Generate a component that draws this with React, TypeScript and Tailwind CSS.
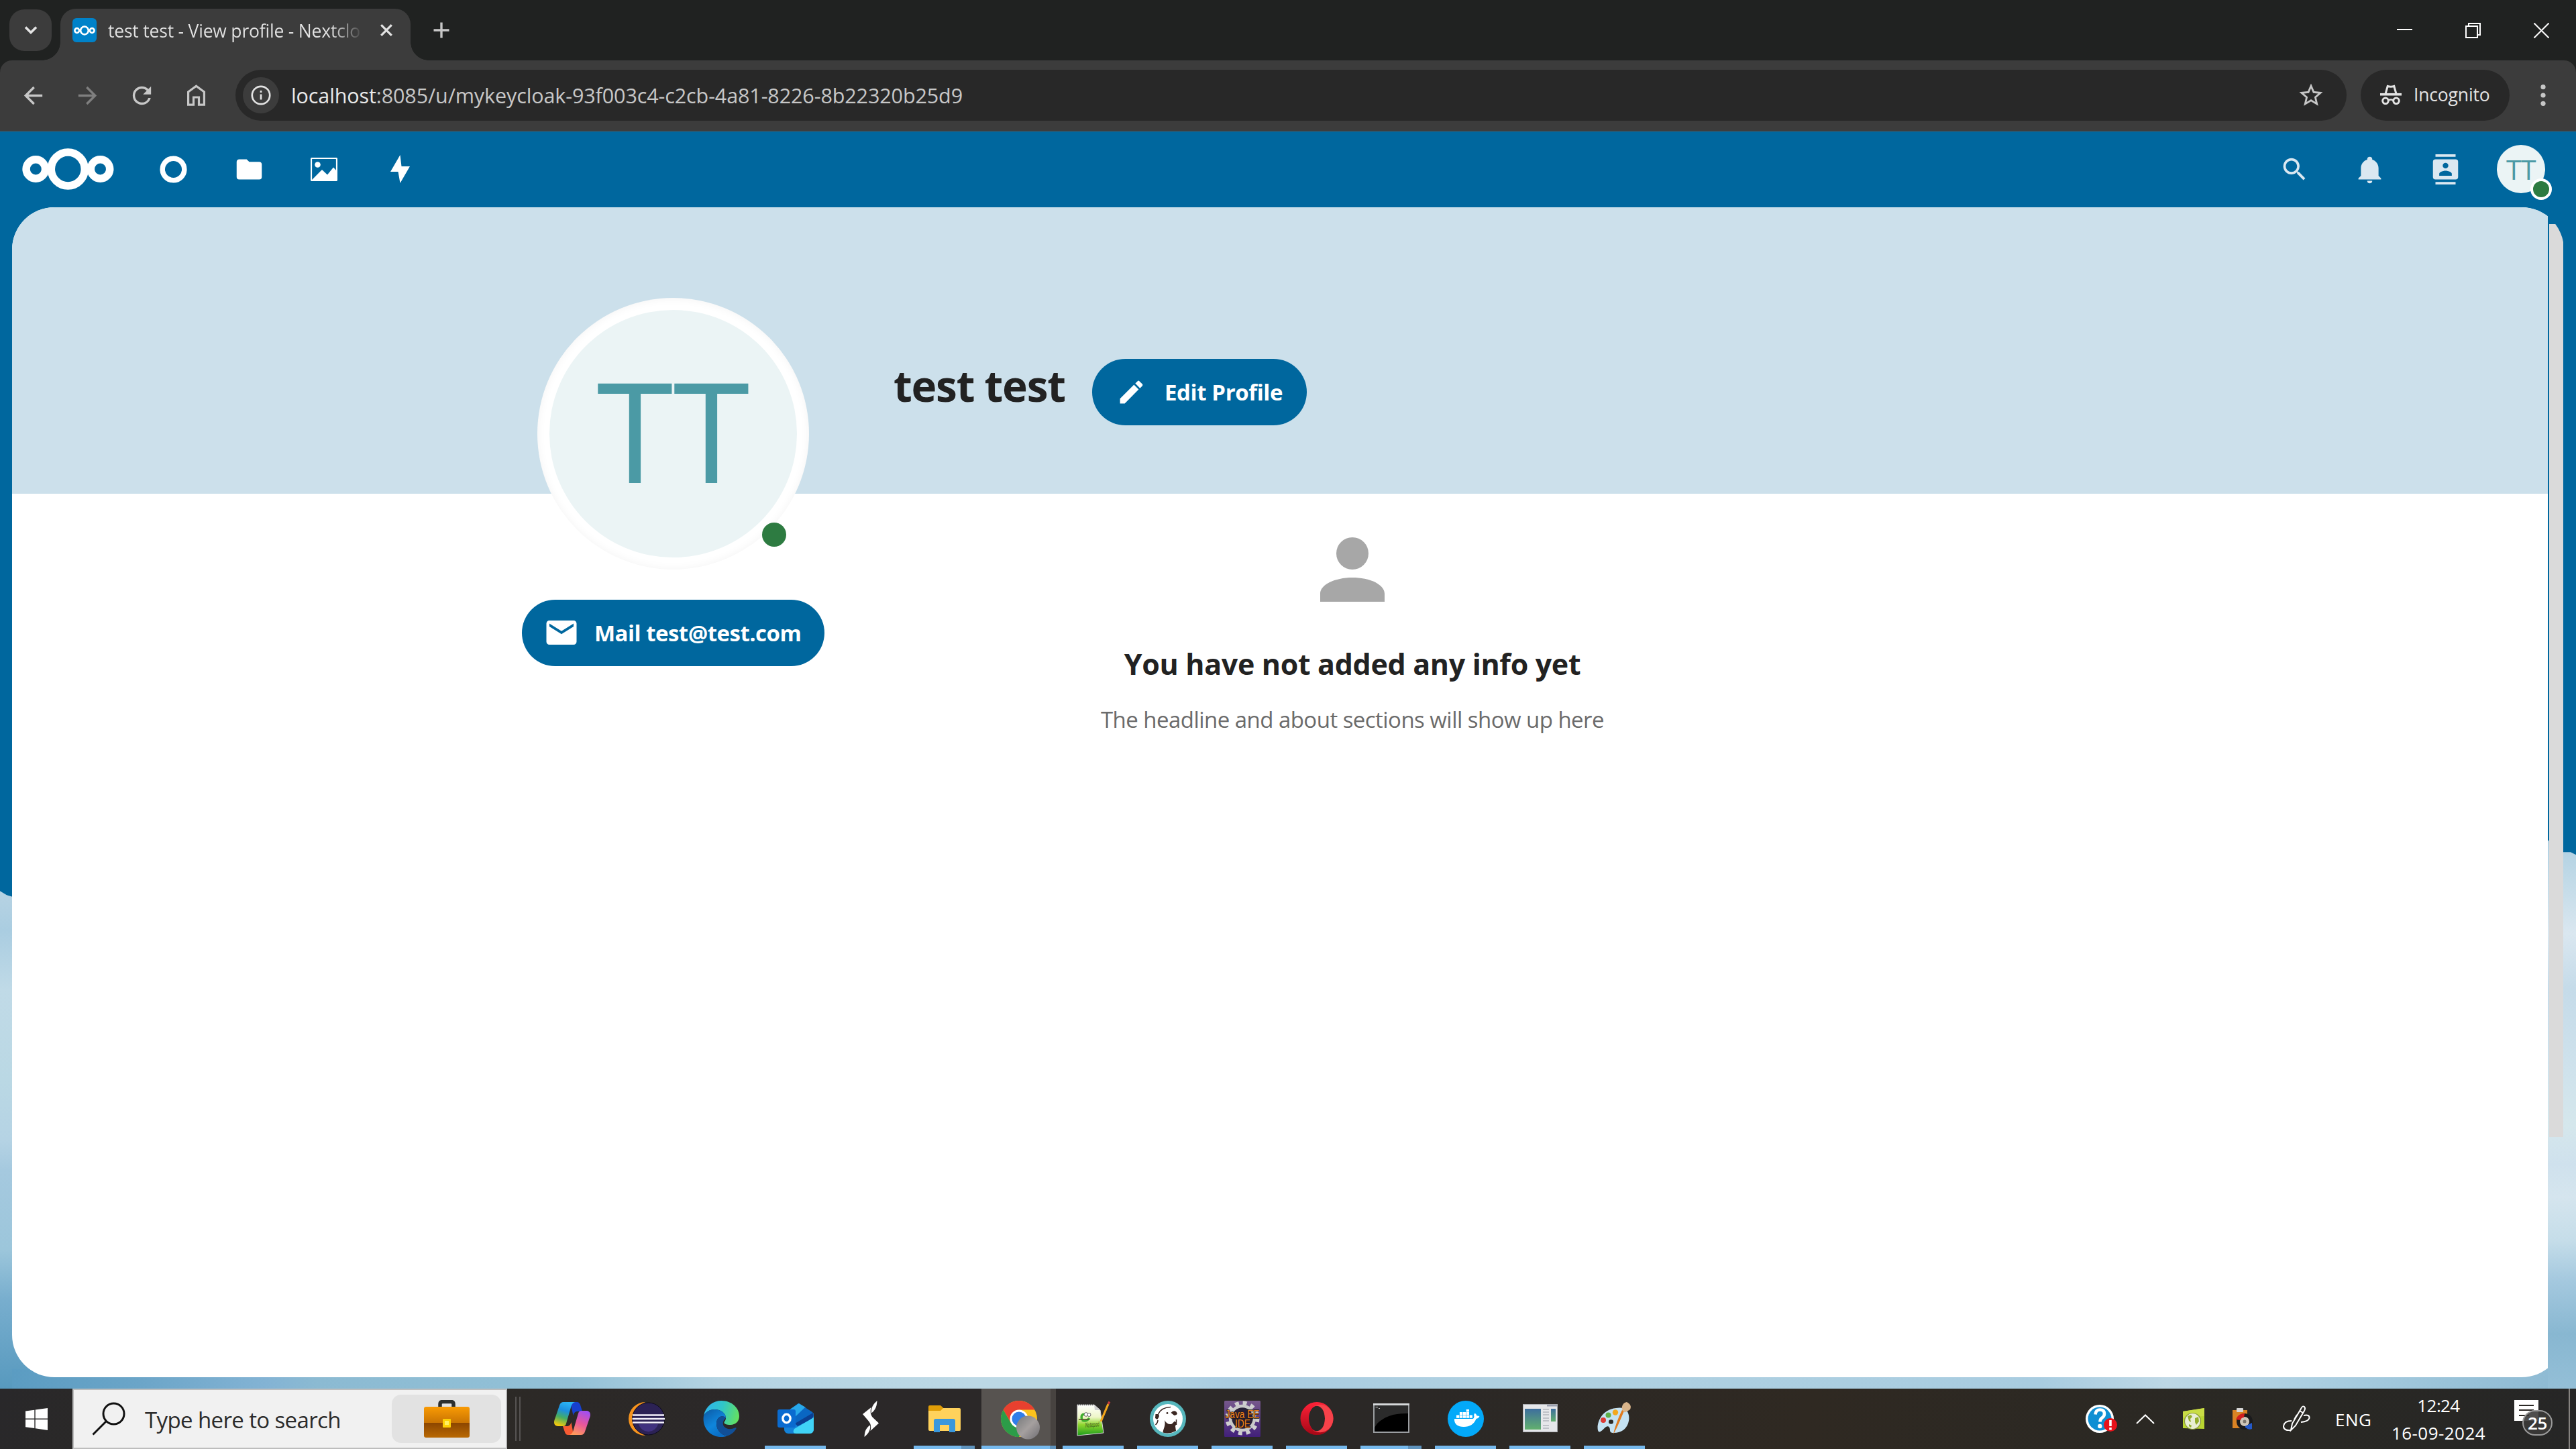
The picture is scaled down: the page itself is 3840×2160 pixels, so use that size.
import React from 'react';
import { MdArrowBack, MdArrowForward, MdRefresh, MdStarBorder, MdSearch } from 'react-icons/md';

function Logo({ className }: { className: string }) {
  return (
    <svg className={className} viewBox="0 0 137 62" fill="none" stroke="currentColor" strokeWidth="11.5">
      <circle cx="20.3" cy="31" r="14.2" />
      <circle cx="68.3" cy="31" r="25" />
      <circle cx="116.5" cy="31" r="14.2" />
    </svg>
  );
}

function TabStrip() {
  return (
    <div className="flex h-[90px] items-start text-[#e3e3e3]">
      <button className="mt-[14px] ml-[14px] flex h-[62px] w-[63px] items-center justify-center rounded-[22px] bg-[#3c3c3c]">
        <svg className="h-[14px] w-[20px]" viewBox="0 0 20 14" fill="none" stroke="currentColor" strokeWidth="3.6">
          <path d="M2 2.5L10 10.5L18 2.5" />
        </svg>
      </button>
      <div className="relative mt-[13px] ml-[13px] h-[77px] w-[522px] rounded-t-[23px] bg-[#3c3c3c]">
        <span className="absolute bottom-0 -left-[27px] h-[27px] w-[27px] bg-[radial-gradient(circle_at_0_0,transparent_26.5px,#3c3c3c_27px)]" />
        <span className="absolute -right-[27px] bottom-0 h-[27px] w-[27px] bg-[radial-gradient(circle_at_100%_0,transparent_26.5px,#3c3c3c_27px)]" />
        <div className="flex h-[64px] items-center pl-[18px]">
          <span className="flex h-[36px] w-[36px] items-center justify-center rounded-[6px] bg-[#0082c9] text-white">
            <Logo className="h-[15px] w-[32px]" />
          </span>
          <span className="ml-[17px] w-[377px] overflow-hidden bg-[linear-gradient(90deg,#e3e3e3_88%,#3c3c3c_101%)] bg-clip-text pt-[3px] text-[26.5px] tracking-[-0.2px] whitespace-nowrap text-transparent">
            test test - View profile - Nextclo
          </span>
          <svg className="ml-[29px] h-[18px] w-[18px]" viewBox="0 0 18 18" fill="none" stroke="currentColor" strokeWidth="3.2">
            <path d="M1.2 1.2L16.8 16.8M16.8 1.2L1.2 16.8" />
          </svg>
        </div>
      </div>
      <svg className="mt-[33px] ml-[34px] h-[24px] w-[24px] text-[#c7c7c7]" viewBox="0 0 24 24" fill="none" stroke="currentColor" strokeWidth="3.4">
        <path d="M12 .5V23.500M.5 12H23.500" />
      </svg>
      <div className="ml-auto flex h-[90px] items-center gap-[79px] pr-[40px] text-white">
        <svg className="h-[24px] w-[23px]" viewBox="0 0 23 24" fill="none" stroke="currentColor" strokeWidth="2">
          <path d="M0 11H23" />
        </svg>
        <svg className="h-[23px] w-[23px]" viewBox="0 0 23 23" fill="none" stroke="currentColor" strokeWidth="2">
          <path d="M1 5H18V22H1zM5 5V1H22V18H18" />
        </svg>
        <svg className="h-[23px] w-[23px]" viewBox="0 0 23 23" fill="none" stroke="currentColor" strokeWidth="2">
          <path d="M.5 .5L22.500 22.500M22.500 .5L.5 22.500" />
        </svg>
      </div>
    </div>
  );
}

function Toolbar() {
  return (
    <div className="flex h-[105.500px] items-center rounded-t-[18px] border-b-[1.500px] border-[#4b4b4b] bg-[#3c3c3c] pl-[29px] text-[#c7c7c7]">
      <MdArrowBack className="h-[41px] w-[41px]" />
      <MdArrowForward className="ml-[40px] h-[41px] w-[41px] text-[#7f7f7f]" />
      <MdRefresh className="ml-[40px] h-[41px] w-[41px]" />
      <svg className="ml-[47px] h-[32px] w-[27px]" viewBox="0 0 27 32" fill="none" stroke="currentColor" strokeWidth="3.2">
        <path d="M1.600 11L13.500 2.200L25.400 11V30.200H17.500V19H9.500V30.200H1.600z" />
      </svg>
      <div className="ml-[45px] flex h-[76px] w-[3147px] items-center rounded-full bg-[#282828] pl-[11px]">
        <span className="flex h-[54px] w-[54px] items-center justify-center rounded-full bg-[#3c3c3c] text-[#e3e3e3]">
          <svg className="h-[30px] w-[30px]" viewBox="0 0 30 30" fill="none" stroke="currentColor" strokeWidth="2.700">
            <circle cx="15" cy="15" r="13.200" />
            <path d="M15 13.500V21.500M15 8V11" />
          </svg>
        </span>
        <span className="ml-[18px] pt-[2px] text-[30.500px] tracking-[-0.11px] text-[#c7c7c7]">
          <span className="text-[#e9e9e9]">localhost</span>:8085/u/mykeycloak-93f003c4-c2cb-4a81-8226-8b22320b25d9
        </span>
        <MdStarBorder className="mr-[32px] ml-auto h-[42px] w-[42px]" />
      </div>
      <div className="ml-[21px] flex h-[76px] w-[222px] items-center rounded-full bg-[#282828] pb-[2px] pl-[29px] text-[#e3e3e3]">
        <svg className="h-[30px] w-[32px]" viewBox="0 0 32 30" fill="none" stroke="currentColor" strokeWidth="3">
          <path d="M0 14.700H32" strokeWidth="3.600" />
          <path d="M8 14L11.200 2.500Q16 4 20.800 2.500L24 14" />
          <circle cx="8" cy="24.300" r="4.300" />
          <circle cx="24" cy="24.300" r="4.300" />
          <path d="M12 23.500Q16 21.500 20 23.500" strokeWidth="2.400" />
        </svg>
        <span className="ml-[18px] pt-[2px] text-[26.500px] tracking-[-0.17px]">Incognito</span>
      </div>
      <svg className="ml-[46px] h-[32px] w-[8px]" viewBox="0 0 8 32" fill="currentColor">
        <circle cx="4" cy="3.700" r="3.600" />
        <circle cx="4" cy="16" r="3.600" />
        <circle cx="4" cy="28.300" r="3.600" />
      </svg>
    </div>
  );
}

function Wallpaper() {
  return (
    <svg className="absolute inset-0 h-full w-full" viewBox="0 196 3840 1874" preserveAspectRatio="none">
      <defs>
        <linearGradient id="wl" gradientUnits="userSpaceOnUse" x1="0" y1="1328" x2="0" y2="2070">
          <stop offset="0" stopColor="#b7d3e3" />
          <stop offset=".08" stopColor="#aacde1" />
          <stop offset=".2" stopColor="#c0dae7" />
          <stop offset=".38" stopColor="#bad8e4" />
          <stop offset=".5" stopColor="#b5d3e4" />
          <stop offset=".56" stopColor="#a5c9df" />
          <stop offset=".72" stopColor="#9cc6db" />
          <stop offset=".82" stopColor="#78aece" />
          <stop offset="1" stopColor="#5799be" />
        </linearGradient>
        <linearGradient id="wr" gradientUnits="userSpaceOnUse" x1="0" y1="1252" x2="0" y2="2070">
          <stop offset="0" stopColor="#afd0e2" />
          <stop offset=".08" stopColor="#c3dbe8" />
          <stop offset=".17" stopColor="#dae7f0" />
          <stop offset=".27" stopColor="#c5dbe9" />
          <stop offset=".42" stopColor="#cfe2ec" />
          <stop offset=".52" stopColor="#d5e7ec" />
          <stop offset=".59" stopColor="#cfe1ed" />
          <stop offset=".65" stopColor="#d5e5ee" />
          <stop offset=".73" stopColor="#c5dde9" />
          <stop offset=".8" stopColor="#a5c9df" />
          <stop offset=".9" stopColor="#88b7d1" />
          <stop offset="1" stopColor="#94bfd7" />
        </linearGradient>
        <linearGradient id="wb">
          <stop offset="0" stopColor="#5b9cc2" />
          <stop offset=".05" stopColor="#6ba5c8" />
          <stop offset=".1" stopColor="#83b3d4" />
          <stop offset=".12" stopColor="#8bbad2" />
          <stop offset=".22" stopColor="#93c1d7" />
          <stop offset=".28" stopColor="#b5d4e3" />
          <stop offset=".38" stopColor="#bcd8e5" />
          <stop offset=".43" stopColor="#b8d8e5" />
          <stop offset=".48" stopColor="#a9cce1" />
          <stop offset=".6" stopColor="#b0d1e1" />
          <stop offset=".8" stopColor="#a8cce0" />
          <stop offset=".85" stopColor="#bdd7e5" />
          <stop offset=".9" stopColor="#add0e2" />
          <stop offset=".96" stopColor="#9ac3d9" />
          <stop offset="1" stopColor="#8fbbd4" />
        </linearGradient>
      </defs>
      <path d="M0 1328L10 1334L20 1337H90V2070H0z" fill="url(#wl)" />
      <path d="M3780 1245L3798 1252L3821 1270L3832 1270L3840 1274V2070H3780z" fill="url(#wr)" />
      <path d="M18 2040H3798V2070H18z" fill="url(#wb)" />
    </svg>
  );
}

function NavBar() {
  return (
    <header className="relative flex h-[113px] items-center pl-[33px] text-white">
      <Logo className="h-[62px] w-[137px]" />
      <svg className="ml-[68px] h-[41px] w-[41px]" viewBox="0 0 41 41" fill="none" stroke="currentColor" strokeWidth="7.500">
        <circle cx="20.500" cy="20.500" r="16.300" />
      </svg>
      <svg className="ml-[70px] h-[45px] w-[45px]" viewBox="0 0 24 24" fill="currentColor">
        <path d="M10,4H4C2.890,4 2,4.890 2,6V18A2,2 0 0,0 4,20H20A2,2 0 0,0 22,18V8C22,6.890 21.100,6 20,6H12L10,4Z" />
      </svg>
      <svg className="ml-[69px] h-[35px] w-[40px]" viewBox="0 0 40 35">
        <rect x="1" y="1" width="38" height="33" rx="1" fill="none" stroke="currentColor" strokeWidth="2.200" />
        <circle cx="10.500" cy="10.500" r="4.300" fill="currentColor" />
        <path d="M2 33L8 27L17 18L25 25.500L34 14.500L39 20V34H2z" fill="currentColor" />
      </svg>
      <svg className="ml-[79px] h-[42px] w-[29px]" viewBox="0 0 29 42" fill="currentColor">
        <path d="M14.500 0L0 25H11.500L14.500 42L29 17H16.500z" />
      </svg>
      <div className="ml-auto flex items-center text-[#dbe8f1]">
        <MdSearch className="h-[45px] w-[45px]" />
        <svg className="ml-[67px] h-[45px] w-[45px]" viewBox="0 0 24 24" fill="currentColor">
          <path d="M21,19V20H3V19L5,17V11C5,7.900 7.030,5.170 10,4.290C10,4.190 10,4.100 10,4A2,2 0 0,1 12,2A2,2 0 0,1 14,4C14,4.100 14,4.190 14,4.290C16.970,5.170 19,7.900 19,11V17L21,19M14,21A2,2 0 0,1 12,23A2,2 0 0,1 10,21" />
        </svg>
        <svg className="ml-[68px] h-[45px] w-[45px]" viewBox="0 0 24 24" fill="currentColor">
          <path d="M20,0H4V2H20V0M4,24H20V22H4V24M20,4H4A2,2 0 0,0 2,6V18A2,2 0 0,0 4,20H20A2,2 0 0,0 22,18V6A2,2 0 0,0 20,4M12,6.750A2.250,2.250 0 0,1 14.250,9A2.250,2.250 0 0,1 12,11.250A2.250,2.250 0 0,1 9.750,9A2.250,2.250 0 0,1 12,6.750M17,17H7V15.500C7,13.830 10.330,13 12,13C13.670,13 17,13.830 17,15.500V17Z" />
        </svg>
        <div className="relative mr-[46px] ml-[54px] flex h-[72px] w-[72px] items-center justify-center rounded-full bg-[#ebf4f5] text-[41px] leading-none tracking-[-0.500px] text-[#4b9aa5]">
          TT
          <span className="absolute -right-[10px] -bottom-[10px] h-[32px] w-[32px] rounded-full border-4 border-white bg-[#2d7b41]" />
        </div>
      </div>
    </header>
  );
}

function Profile() {
  return (
    <div className="relative ml-[18px] flex h-[1744px] w-[3804px] items-start overflow-hidden rounded-[63px]">
      <main className="h-full w-[3780px] bg-white">
        <div className="flex h-[427px] items-start bg-[#cce0eb] pt-[226px] pl-[1314px]">
          <h2 className="w-[296px] pt-px text-[64px] leading-[78px] font-bold tracking-[-1.250px] text-[#222]">test test</h2>
          <button className="flex h-[99px] w-[320px] items-center gap-[27px] rounded-full bg-[#00679e] pl-[36px] text-[33px] font-bold tracking-[-0.400px] whitespace-nowrap text-white">
            <svg className="h-[45px] w-[45px]" viewBox="0 0 24 24" fill="currentColor">
              <path d="M20.710,7.040C21.100,6.650 21.100,6 20.710,5.630L18.370,3.290C18,2.900 17.350,2.900 16.960,3.290L15.120,5.120L18.870,8.870M3,17.250V21H6.750L17.810,9.930L14.060,6.180L3,17.250Z" />
            </svg>
            <span className="pt-[2px]">Edit Profile</span>
          </button>
        </div>
        <div className="flex items-start">
          <aside className="-mt-[292px] ml-[760px] flex w-[451px] flex-col items-center">
            <div className="relative flex h-[405px] w-[405px] items-center justify-center rounded-full bg-white shadow-[inset_0_0_14px_rgba(0,0,0,0.05)]">
              <div className="flex h-[369px] w-[369px] items-center justify-center rounded-full bg-[#ebf4f5] pb-[12px] text-[207px] leading-none text-[#4b9aa5]">
                TT
              </div>
              <span className="absolute right-[34px] bottom-[34px] h-[36px] w-[36px] rounded-full bg-[#2d7b41]" />
            </div>
            <button className="mt-[45px] flex h-[99px] w-[451px] items-center gap-[22px] rounded-full bg-[#00679e] pl-[32px] text-[33px] font-bold tracking-[-0.520px] whitespace-nowrap text-white">
              <svg className="h-[54px] w-[54px]" viewBox="0 0 24 24" fill="currentColor">
                <path d="M20,8L12,13L4,8V6L12,11L20,6M20,4H4C2.890,4 2,4.890 2,6V18A2,2 0 0,0 4,20H20A2,2 0 0,0 22,18V6C22,4.890 21.100,4 20,4Z" />
              </svg>
              <span className="pt-[2px]">Mail test@test.com</span>
            </button>
          </aside>
          <section className="mt-[41px] ml-[387px] flex w-[800px] flex-col items-center">
            <svg className="h-[144px] w-[144px] text-[#a7a7a7]" viewBox="0 0 24 24" fill="currentColor">
              <path d="M12,4A4,4 0 0,1 16,8A4,4 0 0,1 12,12A4,4 0 0,1 8,8A4,4 0 0,1 12,4M12,14C16.420,14 20,15.790 20,18V20H4V18C4,15.790 7.580,14 12,14Z" />
            </svg>
            <h3 className="mt-[39px] text-[43px] leading-[60px] font-bold tracking-[-0.350px] text-[#222]">You have not added any info yet</h3>
            <p className="mt-[28px] text-[33px] leading-[50px] tracking-[-0.540px] text-[#6b6b6b]">
              The headline and about sections will show up here
            </p>
          </section>
        </div>
      </main>
      <div className="mt-[25px] ml-[2px] h-[1361px] w-[21px] bg-[#dadada]" />
    </div>
  );
}

const Copilot = () => (
  <svg className="h-[54px] w-[54px]" viewBox="0 0 54 54">
    <defs>
      <linearGradient id="cpa" x1="0.600" y1="0" x2="0.300" y2="1">
        <stop offset="0" stopColor="#2bb5f5" />
        <stop offset=".35" stopColor="#1c8fe0" />
        <stop offset=".65" stopColor="#45ad63" />
        <stop offset="1" stopColor="#f6ca0c" />
      </linearGradient>
      <linearGradient id="cpb" x1="0.700" y1="0" x2="0.300" y2="1">
        <stop offset="0" stopColor="#a34ff0" />
        <stop offset=".5" stopColor="#e8569b" />
        <stop offset="1" stopColor="#ff9b5a" />
      </linearGradient>
    </defs>
    <path d="M24 2h10c3 0 4.500 2 5.300 5L42 16h-7c-4 0-5.500 2.500-6.500 6z" fill="#1740cf" />
    <path d="M29 51H21c-3 0-4.500-2-5.300-5L13 38h6c4 0 5.500-2.500 6.500-6z" fill="#f75b33" />
    <path d="M14 2h18c-4 0-6 4-7 8l-7 24c-1 3-2 4-5 4H6c-5 0-7-4-5.500-9L8 7c1-3.500 3-5 6-5z" fill="url(#cpa)" />
    <path d="M40 51H22c4 0 6-4 7-8l7-24c1-3 2-4 5-4h7c5 0 7 4 5.500 9L46 46c-1 3.500-3 5-6 5z" fill="url(#cpb)" />
  </svg>
);

const Eclipse = () => (
  <svg className="h-[54px] w-[54px]" viewBox="0 0 54 54">
    <path d="M25 2A25 25 0 0 0 25 52A28 28 0 0 1 25 2z" fill="#f7941e" />
    <circle cx="29.500" cy="27" r="24" fill="#2c2255" stroke="#0d0b1c" strokeWidth="1" />
    <path d="M15 35h29a15 15 0 0 1-29 0z" fill="#40317f" />
    <path d="M6 21.500H53M5.500 27H54M6 32.500H53" stroke="#f2f0fa" strokeWidth="2.700" />
  </svg>
);

const Edge = () => (
  <svg className="h-[54px] w-[54px]" viewBox="0 0 54 54">
    <defs>
      <linearGradient id="eda" x1="0" y1=".3" x2="1" y2=".5">
        <stop offset="0" stopColor="#2fb4ee" />
        <stop offset=".5" stopColor="#30c6c8" />
        <stop offset="1" stopColor="#63e062" />
      </linearGradient>
      <linearGradient id="edb" x1="0" y1="0" x2="0.600" y2="1">
        <stop offset="0" stopColor="#0c59a4" />
        <stop offset=".6" stopColor="#0f86dc" />
        <stop offset="1" stopColor="#0a6cc4" />
      </linearGradient>
    </defs>
    <path d="M1 22C4 8 15 0 27.500 0C43 0 54 11 54 23C54 31 48 36 41 36C35 36 31.500 34.500 31.500 32.500C31.500 31 34 30 34 25.500C34 19 27 13 17 13C10 13 4 17 1 22z" fill="url(#eda)" />
    <path d="M1 22C4 17 9.500 13 17 13C27 13 34 19 34 25.500C28 20 20 25 20 34C20 43 26 51 36 52.500C33 53.600 30 54 27 54C11 54-2 40 1 22z" fill="url(#edb)" />
    <path d="M34 25.500C28 20 20 25 20 34C20 43 26 51 36 52.500C42 50.500 47 46.500 49.500 41.500C50 40.500 49 39.800 48 40.300C36 46 26 38 31 29z" fill="#114f97" />
  </svg>
);

const Outlook = () => (
  <svg className="h-[54px] w-[54px]" viewBox="0 0 54 54">
    <path d="M9 20L31 4L54 19V43a6 6 0 0 1-6 6H16a6 6 0 0 1-6-6z" fill="#1482d8" />
    <path d="M14 16L32 4L42 10L22 30z" fill="#28a8ea" />
    <path d="M41 10L52 17Q54 19 53 22L30 36L20 30z" fill="#0a66c2" />
    <path d="M53 18Q55 24 50 28L30 38L26 34z" fill="#0b3f91" />
    <path d="M54 25V43a6 6 0 0 1-6 6H28Q21 49 25 42z" fill="#40d3f7" />
    <rect x="0" y="13" width="27" height="27" rx="3" fill="#0a6bd0" />
    <ellipse cx="13.500" cy="26.500" rx="5.600" ry="6.300" fill="none" stroke="#fff" strokeWidth="3.400" />
  </svg>
);

const Bolt = () => (
  <svg className="h-[54px] w-[54px]" viewBox="0 0 54 54" fill="#fff">
    <path d="M37.500 0C37 7 36 13 29 18.500C28 11 31 6 37.500 0z" />
    <path d="M28.500 10C27 16 27.500 21 31 25L40 33.500L27.500 45C29.500 37 27 33 24.500 30L16 20z" />
    <path d="M18.500 54C19 47 20 41 27 36.500C28 43 25 49 18.500 54z" />
  </svg>
);

const Explorer = () => (
  <svg className="h-[54px] w-[54px]" viewBox="0 0 54 54">
    <path d="M3 9a2 2 0 0 1 2-2H21L26 11.500L21 18H3z" fill="#e09d06" />
    <path d="M3 15H21L25 11H49a2 2 0 0 1 2 2V43a2 2 0 0 1-2 2H5a2 2 0 0 1-2-2z" fill="#ffd25c" />
    <path d="M11 47V30a3 3 0 0 1 3-3H40a3 3 0 0 1 3 3V47H34V36H20V47z" fill="#3a97dc" />
  </svg>
);

const Chrome = () => (
  <svg className="h-[60px] w-[60px] overflow-visible" viewBox="0 0 60 60">
    <defs>
      <linearGradient id="incg" x1="0" y1="0" x2="1" y2="1">
        <stop offset="0" stopColor="#77797b" />
        <stop offset=".5" stopColor="#a5a09f" />
        <stop offset="1" stopColor="#6f6d72" />
      </linearGradient>
    </defs>
    <circle cx="30" cy="30" r="27" fill="#fbc21c" />
    <path d="M6.600 16.500A27 27 0 0 1 53.400 16.500H30L18.300 36.700z" fill="#e8402f" />
    <path d="M6.600 16.500A27 27 0 0 0 30 57L41.700 36.700H18.300z" fill="#2c9c48" />
    <circle cx="30" cy="30" r="13.500" fill="#fff" />
    <circle cx="30" cy="30" r="10.500" fill="#2f7de9" />
    <circle cx="43.500" cy="43" r="17.500" fill="url(#incg)" />
  </svg>
);

const NotepadPP = () => (
  <svg className="h-[54px] w-[54px]" viewBox="0 0 54 54">
    <defs>
      <linearGradient id="npp" x1="0" y1="0" x2="0" y2="1">
        <stop offset="0" stopColor="#fff" />
        <stop offset=".4" stopColor="#eef6c8" />
        <stop offset=".65" stopColor="#8fd62e" />
        <stop offset="1" stopColor="#1d9c1d" />
      </linearGradient>
    </defs>
    <path d="M3 6H28L37 14L42 48L3 52z" fill="url(#npp)" stroke="#d8d8d8" strokeWidth="1" />
    <path d="M28 6L29 14L37 14z" fill="#cfcfcf" />
    <path d="M4 6H27" stroke="#555" strokeWidth="2" strokeDasharray="1.500 1.500" />
    <path d="M10 29Q7 19 15 20.500M10 29Q16 32 21 26" fill="none" stroke="#3fae2d" strokeWidth="3.500" />
    <path d="M5 28H21" stroke="#5c4a32" strokeWidth="1.500" />
    <circle cx="16" cy="20.500" r="2.800" fill="#fff" stroke="#444" strokeWidth=".8" />
    <circle cx="20.500" cy="21" r="2.500" fill="#fff" stroke="#444" strokeWidth=".8" />
    <text x="15" y="40" fontSize="10" fill="#2f4a1e" fontFamily="Open Sans" fontStyle="italic" textLength="21" lengthAdjust="spacingAndGlyphs" transform="rotate(-5 15 40)">Notepad</text>
    <path d="M38 31L49 5" stroke="#f1a51c" strokeWidth="3.200" />
    <path d="M49 5L51 1.500" stroke="#c63c3c" strokeWidth="3.200" />
  </svg>
);

const DBeaver = () => (
  <svg className="h-[54px] w-[54px]" viewBox="0 0 54 54">
    <circle cx="27" cy="27" r="27" fill="#57b7bd" />
    <circle cx="27" cy="27" r="22" fill="#fff" />
    <path d="M19.500 47.500C20 41 24 38 22 29C25 34.500 29 36 33 34.500L37 30.500L40 33L38 38L39 45Q29 50.500 19.500 47.500z" fill="#3b2722" />
    <path d="M8.500 20H13Q15.500 23 11 28L8 26zM31.500 18Q35 13.500 39.500 16.500Q43 21 36.500 22z" fill="#3b2722" />
    <path d="M12.500 20Q17 10 31 9.500M39.500 28V36M12 29Q12 33 8.500 36" fill="none" stroke="#3b2722" strokeWidth="1.500" />
    <circle cx="26" cy="18.500" r="1.400" fill="#3b2722" />
  </svg>
);

const JavaEE = () => (
  <svg className="h-[54px] w-[54px] overflow-visible" viewBox="0 0 54 54">
    <defs>
      <linearGradient id="jee" x1="0" y1="0" x2="0" y2="1">
        <stop offset="0" stopColor="#76588c" />
        <stop offset="1" stopColor="#42207a" />
      </linearGradient>
    </defs>
    <rect width="54" height="54" rx="1.500" fill="url(#jee)" />
    <circle cx="27" cy="26" r="22.500" fill="none" stroke="#cfcfcf" strokeWidth="6" strokeDasharray="5.900 5.880" />
    <circle cx="27" cy="26" r="18" fill="#271f36" stroke="#c9c9c9" strokeWidth="4.500" />
    <g fontFamily="Liberation Sans" fill="#f58220" stroke="#231a10" strokeWidth="1.500" paintOrder="stroke">
      <text x="1.500" y="25.500" fontSize="16" textLength="51" lengthAdjust="spacingAndGlyphs">Java EE</text>
      <text x="16" y="39.500" fontSize="16.500" textLength="23" lengthAdjust="spacingAndGlyphs">IDE</text>
    </g>
  </svg>
);

const Opera = () => (
  <svg className="h-[54px] w-[54px]" viewBox="0 0 54 54">
    <defs>
      <linearGradient id="opa" x1="0" y1="0" x2="0" y2="1">
        <stop offset="0" stopColor="#ff2238" />
        <stop offset="1" stopColor="#a60716" />
      </linearGradient>
    </defs>
    <path fillRule="evenodd" d="M27 2a24.500 24.500 0 1 0 0 49a24.500 24.500 0 1 0 0-49zM28 7.500c7 0 11 8.500 11 19s-4 19-11 19s-13-8-13-19s6-19 13-19z" fill="url(#opa)" />
    <path d="M20 9.500C35 0 51.500 10 51.500 26.500S35 53 20 43.500C30 49 39 41 39 26.500S30 4 20 9.500z" fill="#f7424a" />
  </svg>
);

const Cmd = () => (
  <svg className="h-[54px] w-[54px]" viewBox="0 0 54 54">
    <rect x="0" y="4" width="54" height="44" fill="#9b9ea1" />
    <rect x="0" y="4" width="54" height="3" fill="#d5d8da" />
    <rect x="2" y="7" width="50" height="39" fill="#000" />
    <path d="M2 7H52V19Q22 18 6 34L2 40z" fill="#2b2b2b" />
    <path d="M3.500 9.500H7M8 11.500H10" stroke="#ccc" strokeWidth="1" />
  </svg>
);

const Docker = () => (
  <svg className="h-[54px] w-[54px]" viewBox="0 0 54 54">
    <circle cx="27" cy="27" r="27" fill="#03a9f9" />
    <path d="M10 27H37.500Q39.500 26 39.500 23.500Q38.500 20.500 40.500 18.500Q43 20 43.500 22.500Q46 22 47.500 23.500Q46 26.500 42.500 27C39.500 35 33 39 24 39C15 39 9.500 35 10 27z" fill="#fff" />
    <g fill="#fff">
      <rect x="13" y="21.500" width="4.300" height="4.300" />
      <rect x="17.900" y="21.500" width="4.300" height="4.300" />
      <rect x="22.800" y="21.500" width="4.300" height="4.300" />
      <rect x="27.700" y="21.500" width="4.300" height="4.300" />
      <rect x="32.600" y="21.500" width="4.300" height="4.300" />
      <rect x="17.900" y="17" width="4.300" height="4" />
      <rect x="22.800" y="17" width="4.300" height="4" />
      <rect x="27.700" y="17" width="4.300" height="4" />
      <rect x="27.700" y="13" width="4.300" height="3.500" />
    </g>
  </svg>
);

const AppWindow = () => (
  <svg className="h-[54px] w-[54px]" viewBox="0 0 54 54">
    <defs>
      <linearGradient id="awg" x1="0" y1="0" x2="0" y2="1">
        <stop offset="0" stopColor="#3d6e9e" />
        <stop offset="1" stopColor="#62b06d" />
      </linearGradient>
    </defs>
    <rect x="1.500" y="5.500" width="51" height="41" fill="#e6e7ea" stroke="#a9abb0" strokeWidth="1" />
    <rect x="37" y="6" width="15" height="2.500" fill="#9ba0b0" />
    <rect x="4" y="12" width="24" height="31" fill="url(#awg)" />
    <rect x="43" y="12" width="7" height="19" fill="url(#awg)" />
    <path d="M31 13H40M31 17H40M31 21H40M31 26H40M31 30H40M31 37H40M31 41H40" stroke="#b3b6bd" strokeWidth="1.300" />
  </svg>
);

const Paint = () => (
  <svg className="h-[54px] w-[54px]" viewBox="0 0 54 54">
    <path d="M29 11C44 8 50 18 48 30C46 41 38 48 25 48C22 48 20 47 20 44C20 40 18 37 14 39C10 42 6 48 3 46C-1 42 2 14 29 11z" fill="#c5e2f3" />
    <ellipse cx="21.500" cy="31.500" rx="3.500" ry="3.200" fill="#2b2825" />
    <circle cx="28" cy="17.500" r="4.200" fill="#f3a81f" />
    <circle cx="17.500" cy="21.500" r="4" fill="#5fb04a" />
    <circle cx="10" cy="29" r="4" fill="#dd3b35" />
    <path d="M25 50C27 40 32 26 38 14L41 15.500C36 27 31 40 25 50z" fill="#e07a1f" />
    <path d="M38 13C37 7 40 3 45 2C51 5 52 9 50 13C46 15 44 18 41 17z" fill="#d9b48a" />
  </svg>
);

type AppEntry = { name: string; icon: React.ReactElement; state: '' | 'open' | 'multi' | 'active' };
const apps: AppEntry[] = [
  { name: 'copilot', icon: <Copilot />, state: '' },
  { name: 'eclipse', icon: <Eclipse />, state: '' },
  { name: 'edge', icon: <Edge />, state: '' },
  { name: 'outlook', icon: <Outlook />, state: 'open' },
  { name: 'bolt', icon: <Bolt />, state: '' },
  { name: 'explorer', icon: <Explorer />, state: 'multi' },
  { name: 'chrome', icon: <Chrome />, state: 'active' },
  { name: 'notepadpp', icon: <NotepadPP />, state: 'open' },
  { name: 'dbeaver', icon: <DBeaver />, state: 'open' },
  { name: 'javaee', icon: <JavaEE />, state: 'open' },
  { name: 'opera', icon: <Opera />, state: 'open' },
  { name: 'cmd', icon: <Cmd />, state: 'multi' },
  { name: 'docker', icon: <Docker />, state: 'open' },
  { name: 'window', icon: <AppWindow />, state: 'open' },
  { name: 'paint', icon: <Paint />, state: 'open' },
];

function TaskbarApp({ app }: { app: AppEntry }) {
  if (app.state === 'active') {
    return (
      <div className="relative flex h-[90px] w-[111px] items-center justify-center border-r-[8px] border-[#474340] bg-[#575350]">
        <div className="ml-[8px]">{app.icon}</div>
        <span className="absolute bottom-0 left-0 h-[5px] w-[102px] bg-[#76b9ed]" />
        <span className="absolute -right-[8px] bottom-0 h-[5px] w-[9px] bg-[#5f93bd]" />
      </div>
    );
  }
  return (
    <div className="relative flex h-[90px] w-[111px] items-center justify-center">
      {app.icon}
      {app.state !== '' && (
        <span className="absolute bottom-0 left-[10px] flex h-[5px] w-[91px] bg-[#76b9ed]">
          {app.state === 'multi' && <span className="ml-auto h-full w-[20px] bg-[#5f93bd]" />}
        </span>
      )}
    </div>
  );
}

function Tray() {
  return (
    <div className="ml-auto flex h-full items-center text-white">
      <svg className="h-[42px] w-[48px] overflow-visible" viewBox="0 0 48 42">
        <circle cx="21" cy="21" r="21" fill="#fff" />
        <circle cx="21" cy="21" r="17.500" fill="#0f8fd3" />
        <path d="M14.500 14.500Q15 7.500 21.500 7.500Q28 7.500 28 13.500Q28 17 24.500 19.500Q21.500 21.500 21.500 25.500" fill="none" stroke="#fff" strokeWidth="4.600" />
        <circle cx="21.300" cy="32" r="3.200" fill="#fff" />
        <circle cx="37" cy="30" r="10" fill="#e8121a" />
        <path d="M37 23V32M37 34V37.500" stroke="#fff" strokeWidth="3.600" />
      </svg>
      <svg className="ml-[27px] h-[15px] w-[28px]" viewBox="0 0 28 15" fill="none" stroke="currentColor" strokeWidth="2">
        <path d="M1 14L14 1.500L27 14" />
      </svg>
      <svg className="ml-[41px] h-[32px] w-[34px]" viewBox="0 0 34 32">
        <path d="M1 5L33 0V31L1 30z" fill="#b9d531" />
        <path d="M1 5L33 0V12L1 14z" fill="#c9dd45" />
        <circle cx="15.500" cy="19.500" r="12" fill="#e9eed4" stroke="#8a9a3c" strokeWidth="1.200" />
        <path d="M8 12L13 10L15 13L12 16L13 21L10 19zM19 15L24 13L25 20L21 25L19 21zM10 24L14 26L13 29L10 27z" fill="#93ad2c" />
      </svg>
      <svg className="ml-[41px] h-[33px] w-[31px]" viewBox="0 0 31 33">
        <rect x="0" y="3" width="22" height="27" fill="#d98324" />
        <rect x="6" y="0" width="10" height="6" rx="1" fill="#d6d6d6" />
        <circle cx="18" cy="20" r="12" fill="#1a1a1c" />
        <circle cx="18" cy="20" r="7" fill="#cfc6b8" />
        <circle cx="18" cy="20" r="2.500" fill="#7b756c" />
        <path d="M5 17Q8 8 18 8L17 14Q13 14 12 18z" fill="#d11f1f" />
        <path d="M19 27L29 22V31Q24 33 19 29z" fill="#2459c9" />
      </svg>
      <svg className="ml-[44px] h-[42px] w-[41px]" viewBox="0 0 41 42" fill="none" stroke="currentColor" strokeWidth="2">
        <path d="M12 38L14 28L27 6Q29 1 32 3Q34 5 32 9L19 31L12 38zM25 9L30 12M21 15L17 22" />
        <path d="M13 24Q2 24 1 32Q1 39 12 38M31 16Q40 14 39.500 20Q38 25 27 26" />
      </svg>
      <span className="ml-[37px] w-[53px] pt-[2px] text-[26px] tracking-[0.500px]">ENG</span>
      <div className="ml-[30px] w-[142px] pt-[2px] text-center text-[26px] leading-[41px]">
        <div className="tracking-[-0.600px]">12:24</div>
        <div className="tracking-[0.450px] whitespace-nowrap">16-09-2024</div>
      </div>
      <div className="relative ml-[42px] h-[56px] w-[58px]">
        <svg className="h-[32px] w-[36px]" viewBox="0 0 36 32">
          <path d="M0 0H36V31H17L9 31H0z" fill="#fff" />
          <path d="M7 8H29M7 15H29M7 23H22" stroke="#2b2825" strokeWidth="2" />
        </svg>
        <span className="absolute top-[15px] left-[12px] flex h-[38px] w-[45px] items-center justify-center rounded-full border-2 border-[#9a9a9a] bg-[#3b3a38]/90 text-[26px] leading-none font-semibold tracking-[-0.400px]">
          25
        </span>
      </div>
      <span className="mr-[9px] ml-[23px] h-full w-[2px] bg-[#85827f]" />
    </div>
  );
}

function Taskbar() {
  return (
    <footer className="flex h-[90px] items-center bg-[linear-gradient(100deg,#29282a,#2d2a24_12%,#2b2829_30%,#2b2826_55%,#2f2922_70%,#292824_90%,#262626)]">
      <div className="flex w-[108px] justify-center">
        <svg className="h-[33px] w-[33px]" viewBox="0 0 33 33" fill="#fff">
          <path d="M0 4.600L13.300 2.800V15.600H0zM14.700 2.600L33 0V15.600H14.700zM0 17H13.300V30L0 28.200zM14.700 17H33V33L14.700 30.300z" />
        </svg>
      </div>
      <div className="flex h-full w-[648px] items-center border-2 border-[#bdbdbd] bg-[#f1f1f1]">
        <svg className="ml-[27px] h-[50px] w-[50px]" viewBox="0 0 50 50" fill="none" stroke="#111" strokeWidth="3">
          <circle cx="32.500" cy="17.500" r="15.500" />
          <path d="M21.500 28.500L1.500 48.500" />
        </svg>
        <span className="ml-[29px] pt-[3px] text-[33px] tracking-[-0.620px] whitespace-nowrap text-[#2b2b2b]">Type here to search</span>
        <div className="mr-[7px] ml-auto flex h-[72px] w-[163px] items-center justify-center rounded-[14px] bg-[#e2e2e2]">
          <svg className="h-[56px] w-[68px]" viewBox="0 0 68 56">
            <defs>
              <linearGradient id="bca" x1="0" y1="0" x2="0" y2="1">
                <stop offset="0" stopColor="#f99b04" />
                <stop offset="1" stopColor="#c97403" />
              </linearGradient>
              <linearGradient id="bcb" x1="0" y1="0" x2="0" y2="1">
                <stop offset="0" stopColor="#8c4600" />
                <stop offset="1" stopColor="#b96903" />
              </linearGradient>
            </defs>
            <path d="M24 11V6Q24 2.500 28 2.500H40Q44 2.500 44 6V11" fill="none" stroke="#2d2f2f" strokeWidth="5.500" />
            <path d="M0 34H68V53a3 3 0 0 1-3 3H3a3 3 0 0 1-3-3z" fill="url(#bcb)" />
            <path d="M3 10H65a3 3 0 0 1 3 3V34H0V13a3 3 0 0 1 3-3z" fill="url(#bca)" />
            <rect x="28" y="28" width="12" height="13" rx="1" fill="#fdd106" />
            <rect x="31" y="31" width="6" height="6" fill="#ffef62" />
          </svg>
        </div>
      </div>
      <div className="flex w-[41px] gap-[4px] pl-[12px]">
        <span className="h-[66px] w-[2px] bg-[#565352]" />
        <span className="h-[66px] w-[2px] bg-[#565352]" />
      </div>
      {apps.map((app) => (
        <TaskbarApp key={app.name} app={app} />
      ))}
      <Tray />
    </footer>
  );
}

export default function App() {
  return (
    <div className="flex h-[2160px] w-[3840px] flex-col overflow-hidden bg-[#202221] font-['Open_Sans','Noto_Sans',sans-serif]">
      <TabStrip />
      <Toolbar />
      <div className="relative min-h-0 flex-1 bg-[#00679e]">
        <Wallpaper />
        <NavBar />
        <Profile />
      </div>
      <Taskbar />
    </div>
  );
}
